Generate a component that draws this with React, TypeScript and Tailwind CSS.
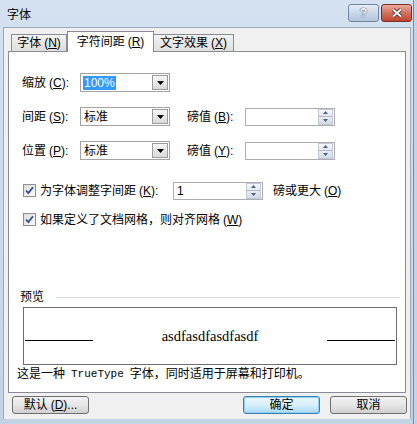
import React from "react";

const cjk = "font-['Liberation_Sans','Noto_Sans_CJK_SC',sans-serif]";

// mnemonic like (N) with underlined letter
function M({ k }: { k: string }) {
  return (
    <span className="ml-[3px]">
      (<span className="underline underline-offset-1">{k}</span>)
    </span>
  );
}

function DownTri() {
  return (
    <svg width="7" height="4" viewBox="0 0 7 4">
      <path d="M0 0h7L3.5 4z" fill="#000" />
    </svg>
  );
}

function Combo({ value, selected }: { value: string; selected?: boolean }) {
  return (
    <div className="flex h-[19px] w-[90px] items-center border border-[#a3a3a3] bg-white">
      <div className="flex-1 pl-[2px]">
        {selected ? (
          <span className="bg-[#3399ff] px-px text-white">{value}</span>
        ) : (
          <span className="pl-px">{value}</span>
        )}
      </div>
      <div className="mr-px flex h-[15px] w-[16px] items-center justify-center border border-[#9c9c9c] bg-gradient-to-b from-[#f6f6f6] to-[#d9d9d9]">
        <DownTri />
      </div>
    </div>
  );
}

function Spin({ value }: { value?: string }) {
  return (
    <div className="flex h-[18px] w-[90px] items-center border border-[#abadb3] bg-white">
      <div className="flex-1 pl-[3px]">{value}</div>
      <div className="mr-px flex h-[16px] w-[15px] flex-col border border-[#c3c8d2]">
        <div className="flex flex-1 items-center justify-center border-b border-[#b5bcc8] bg-gradient-to-b from-[#f7f9fc] to-[#e3e8f0]">
          <svg width="5" height="3" viewBox="0 0 5 3">
            <path d="M0 3h5L2.5 0z" fill="#4a5f8c" />
          </svg>
        </div>
        <div className="flex flex-1 items-center justify-center bg-gradient-to-b from-[#e8ecf2] to-[#d3dae6]">
          <svg width="5" height="3" viewBox="0 0 5 3">
            <path d="M0 0h5L2.5 3z" fill="#4a5f8c" />
          </svg>
        </div>
      </div>
    </div>
  );
}

function Check() {
  return (
    <div className="flex h-[13px] w-[13px] items-center justify-center border border-[#8e8f8f] bg-gradient-to-br from-[#dcdcdc] to-[#fbfbfb]">
      <svg width="9" height="9" viewBox="0 0 9 9">
        <path d="M1 4.5l2.3 2.5L8 1.2" stroke="#2e4e95" strokeWidth="1.8" fill="none" />
      </svg>
    </div>
  );
}

function Btn({ children, def }: { children: React.ReactNode; def?: boolean }) {
  return (
    <div
      className={
        "flex h-[18px] w-[77px] items-center justify-center rounded-[3px] border " +
        (def
          ? "border-[#3c7fb1] bg-gradient-to-b from-[#eaf6fd] via-[#d9f0fc] to-[#a7d9f5] shadow-[inset_0_0_0_1px_#8fd0f2]"
          : "border-[#707070] bg-gradient-to-b from-[#f2f2f2] via-[#e6e6e6] to-[#d0d0d0]")
      }
    >
      {children}
    </div>
  );
}

export default function App() {
  return (
    <div
      className={`flex h-[424px] w-[417px] flex-col overflow-hidden bg-gradient-to-b from-[#d3e1f1] to-[#c3d3e6] text-[12px] leading-[14px] text-black shadow-[inset_-3px_0_0_#c3d3e6,inset_-4px_0_0_#3aa0e6] ${cjk}`}
    >
      {/* title bar */}
      <div className="flex h-[27px] shrink-0 items-start">
        <div className="pl-[7px] pt-[8px] text-[12px] text-black">字体</div>
        <div className="ml-auto mr-[5px] mt-[4px] flex gap-[2px]">
          <div className="flex h-[18px] w-[31px] items-center justify-center rounded-[3px] border border-[#74849b] bg-gradient-to-b from-[#e6eef8] via-[#c9d7ea] to-[#b3c6de]">
            <span className="font-['Liberation_Sans',sans-serif] text-[13px] font-bold text-white [text-shadow:0_0_1px_#303a4a,0_0_1px_#303a4a]">
              ?
            </span>
          </div>
          <div className="flex h-[18px] w-[31px] items-center justify-center rounded-[3px] border border-[#7a2f25] bg-gradient-to-b from-[#e9a99b] via-[#d3705f] to-[#c2432f]">
            <svg width="12" height="10" viewBox="0 0 12 10">
              <path d="M2 1.5l8 7M10 1.5l-8 7" stroke="#4a1d16" strokeWidth="3.6" />
              <path d="M2 1.5l8 7M10 1.5l-8 7" stroke="#fff" strokeWidth="2" />
            </svg>
          </div>
        </div>
      </div>

      {/* client area */}
      <div className="mb-[5px] ml-[3px] mr-[6px] flex flex-1 flex-col border-l border-t border-r border-[#9aaabd] bg-[#f0f0f0]">
        {/* tabs */}
        <div className="ml-[7px] mt-[3px] flex h-[20px] items-end">
          <div className="flex h-[17px] w-[56px] items-center justify-center border border-b-0 border-[#898c95] bg-gradient-to-b from-[#f3f3f3] to-[#dedede]">
            字体<M k="N" />
          </div>
          <div className="relative z-10 -mb-px flex h-[21px] w-[87px] items-center justify-center border border-b-0 border-[#898c95] bg-white pb-px">
            字符间距<M k="R" />
          </div>
          <div className="flex h-[17px] w-[80px] items-center justify-center border border-b-0 border-l-0 border-[#898c95] bg-gradient-to-b from-[#f3f3f3] to-[#dedede]">
            文字效果<M k="X" />
          </div>
        </div>

        {/* tab panel */}
        <div className="ml-[4px] mr-[4px] flex h-[342px] flex-col border border-[#898c95] bg-white">
          <div className="mt-[21px] flex h-[19px] items-center pl-[13px]">
            <div className="w-[58px]">
              缩放<M k="C" />:
            </div>
            <Combo value="100%" selected />
          </div>
          <div className="mt-[15px] flex h-[19px] items-center pl-[13px]">
            <div className="w-[58px]">
              间距<M k="S" />:
            </div>
            <Combo value="标准" />
            <div className="ml-[17px] w-[58px]">
              磅值<M k="B" />:
            </div>
            <Spin />
          </div>
          <div className="mt-[15px] flex h-[19px] items-center pl-[13px]">
            <div className="w-[58px]">
              位置<M k="P" />:
            </div>
            <Combo value="标准" />
            <div className="ml-[17px] w-[58px]">
              磅值<M k="Y" />:
            </div>
            <Spin />
          </div>

          <div className="mt-[21px] flex h-[19px] items-center pl-[14px]">
            <Check />
            <div className="ml-[4px] w-[133px]">
              为字体调整字间距<M k="K" />:
            </div>
            <Spin value="1" />
            <div className="ml-[10px]">
              磅或更大<M k="O" />
            </div>
          </div>
          <div className="mt-[10px] flex h-[19px] items-center pl-[14px]">
            <Check />
            <div className="ml-[4px]">
              如果定义了文档网格，则对齐网格<M k="W" />
            </div>
          </div>

          {/* preview */}
          <div className="mt-[61px] flex h-[14px] items-center pl-[11px] pr-[5px]">
            <span>预览</span>
            <div className="ml-[12px] h-px flex-1 bg-[#d5dfe5]" />
          </div>
          <div className="ml-[14px] mr-[8px] mt-[3px] flex h-[58px] items-center border border-[#6e6e6e] bg-white px-px">
            <div className="mt-[8px] h-px w-[68px] bg-black" />
            <div className="flex-1 text-center font-['Liberation_Serif',serif] text-[14.5px] leading-[16px]">
              asdfasdfasdfasdf
            </div>
            <div className="mt-[8px] h-px w-[68px] bg-black" />
          </div>
          <div className="mt-[2px] flex h-[14px] items-center pl-[8px]">
            这是一种
            <span className="mx-[6px] font-['Liberation_Mono',monospace] text-[11px]">TrueType</span>
            字体，同时适用于屏幕和打印机。
          </div>
        </div>

        {/* buttons */}
        <div className="ml-[8px] mr-[3px] mt-[3px] flex items-center">
          <Btn>
            默认<M k="D" />...
          </Btn>
          <div className="ml-auto flex gap-[10px]">
            <Btn def>确定</Btn>
            <Btn>取消</Btn>
          </div>
        </div>
      </div>
    </div>
  );
}
